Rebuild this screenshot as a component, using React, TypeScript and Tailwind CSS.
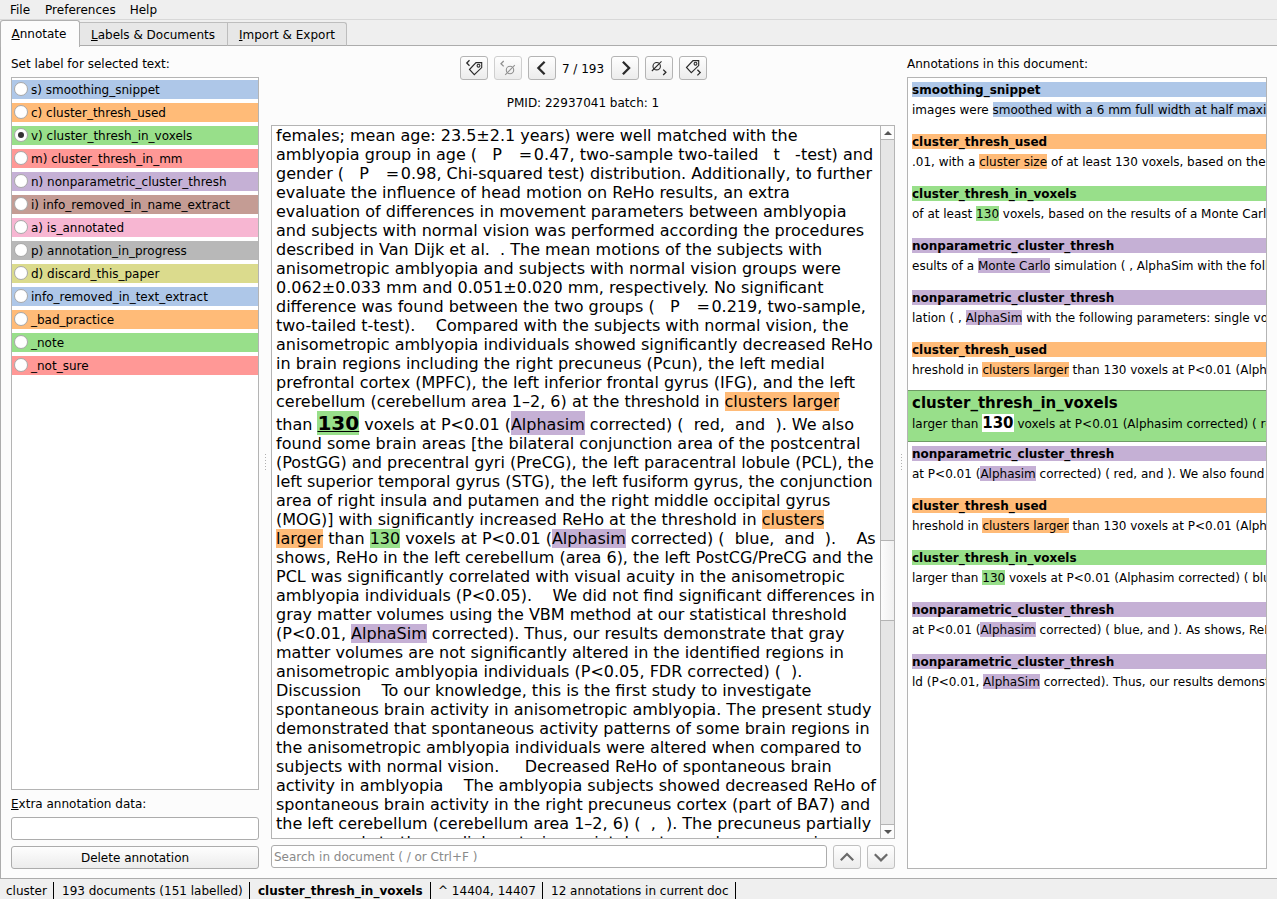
import { type ReactNode } from "react";

const BG: Record<string, string> = {
  blue: "bg-[#aec7e8]",
  orange: "bg-[#ffbb78]",
  green: "bg-[#98df8a]",
  red: "bg-[#ff9896]",
  purple: "bg-[#c5b0d5]",
  brown: "bg-[#c49c94]",
  pink: "bg-[#f7b6d2]",
  gray: "bg-[#b8b8b8]",
  olive: "bg-[#dbdb8d]",
};

const labels: [string, string][] = [
  ["s) smoothing_snippet", "blue"],
  ["c) cluster_thresh_used", "orange"],
  ["v) cluster_thresh_in_voxels", "green"],
  ["m) cluster_thresh_in_mm", "red"],
  ["n) nonparametric_cluster_thresh", "purple"],
  ["i) info_removed_in_name_extract", "brown"],
  ["a) is_annotated", "pink"],
  ["p) annotation_in_progress", "gray"],
  ["d) discard_this_paper", "olive"],
  ["info_removed_in_text_extract", "blue"],
  ["_bad_practice", "orange"],
  ["_note", "green"],
  ["_not_sure", "red"],
];

function Hl({ c, children, className = "" }: { c: string; children: ReactNode; className?: string }) {
  return <span className={`${BG[c]} ${className}`}>{children}</span>;
}

const lines: ReactNode[] = [
  "females; mean age: 23.5±2.1 years) were well matched with the",
  "amblyopia group in age (   P   \u200a=\u200a0.47, two-sample two-tailed   t   -test) and",
  "gender (   P   \u200a=\u200a0.98, Chi-squared test) distribution. Additionally, to further",
  "evaluate the influence of head motion on ReHo results, an extra",
  "evaluation of differences in movement parameters between amblyopia",
  "and subjects with normal vision was performed according the procedures",
  "described in Van Dijk et al.  . The mean motions of the subjects with",
  "anisometropic amblyopia and subjects with normal vision groups were",
  "0.062±0.033 mm and 0.051±0.020 mm, respectively. No significant",
  "difference was found between the two groups (   P   \u200a=\u200a0.219, two-sample,",
  "two-tailed t-test).    Compared with the subjects with normal vision, the",
  "anisometropic amblyopia individuals showed significantly decreased ReHo",
  "in brain regions including the right precuneus (Pcun), the left medial",
  "prefrontal cortex (MPFC), the left inferior frontal gyrus (IFG), and the left",
  <>cerebellum (cerebellum area 1–2, 6) at the threshold in <Hl c="orange">clusters larger</Hl></>,
  <>than <Hl c="green" className="inline-block h-[24px] align-top text-[20px] leading-[25px] font-bold underline underline-offset-1 decoration-1">130</Hl> voxels at P&lt;0.01 (<Hl c="purple" className="inline-block h-[24px] align-top leading-[27px]">Alphasim</Hl> corrected) (  red,  and  ). We also</>,
  "found some brain areas [the bilateral conjunction area of the postcentral",
  "(PostGG) and precentral gyri (PreCG), the left paracentral lobule (PCL), the",
  "left superior temporal gyrus (STG), the left fusiform gyrus, the conjunction",
  "area of right insula and putamen and the right middle occipital gyrus",
  <>(MOG)] with significantly increased ReHo at the threshold in <Hl c="orange">clusters</Hl></>,
  <><Hl c="orange">larger</Hl> than <Hl c="green">130</Hl> voxels at P&lt;0.01 (<Hl c="purple">Alphasim</Hl> corrected) (  blue,  and  ).    As</>,
  "shows, ReHo in the left cerebellum (area 6), the left PostCG/PreCG and the",
  "PCL was significantly correlated with visual acuity in the anisometropic",
  "amblyopia individuals (P<0.05).    We did not find significant differences in",
  "gray matter volumes using the VBM method at our statistical threshold",
  <>(P&lt;0.01, <Hl c="purple">AlphaSim</Hl> corrected). Thus, our results demonstrate that gray</>,
  "matter volumes are not significantly altered in the identified regions in",
  "anisometropic amblyopia individuals (P<0.05, FDR corrected) (  ).",
  "Discussion    To our knowledge, this is the first study to investigate",
  "spontaneous brain activity in anisometropic amblyopia. The present study",
  "demonstrated that spontaneous activity patterns of some brain regions in",
  "the anisometropic amblyopia individuals were altered when compared to",
  "subjects with normal vision.     Decreased ReHo of spontaneous brain",
  "activity in amblyopia    The amblyopia subjects showed decreased ReHo of",
  "spontaneous brain activity in the right precuneus cortex (part of BA7) and",
  "the left cerebellum (cerebellum area 1–2, 6) (  ,  ). The precuneus partially",
  "corresponds to the medial posterior parietal cortex and precuneus is a",
];

type Ann = [string, string, string, string, string];
const anns: Ann[] = [
  ["smoothing_snippet", "blue", "images were ", "smoothed with a 6 mm full width at half maximum", ""],
  ["cluster_thresh_used", "orange", ".01, with a ", "cluster size", " of at least 130 voxels, based on the"],
  ["cluster_thresh_in_voxels", "green", "of at least ", "130", " voxels, based on the results of a Monte Carlo"],
  ["nonparametric_cluster_thresh", "purple", "esults of a ", "Monte Carlo", " simulation ( , AlphaSim with the follow"],
  ["nonparametric_cluster_thresh", "purple", "lation ( , ", "AlphaSim", " with the following parameters: single vox"],
  ["cluster_thresh_used", "orange", "hreshold in ", "clusters larger", " than 130 voxels at P<0.01 (Alpha"],
  ["cluster_thresh_in_voxels", "green", "larger than ", "130", " voxels at P<0.01 (Alphasim corrected) ( red"],
  ["nonparametric_cluster_thresh", "purple", "at P<0.01 (", "Alphasim", " corrected) ( red, and ). We also found"],
  ["cluster_thresh_used", "orange", "hreshold in ", "clusters larger", " than 130 voxels at P<0.01 (Alpha"],
  ["cluster_thresh_in_voxels", "green", "larger than ", "130", " voxels at P<0.01 (Alphasim corrected) ( blue"],
  ["nonparametric_cluster_thresh", "purple", "at P<0.01 (", "Alphasim", " corrected) ( blue, and ). As shows, ReHo"],
  ["nonparametric_cluster_thresh", "purple", "ld (P<0.01, ", "AlphaSim", " corrected). Thus, our results demonstrate"],
];

const status: [string, string][] = [
  ["cluster", "w-[54px] pl-[6px]"],
  ["193 documents (151 labelled)", "w-[196px] pl-[8px]"],
  ["cluster_thresh_in_voxels", "w-[181px] pl-[8px] font-bold"],
  ["^ 14404, 14407", "w-[112px] pl-[7px]"],
  ["12 annotations in current doc", "w-[193px] pl-[8px]"],
];

const BTN = "flex items-center justify-center rounded-[3px] border bg-linear-to-b from-[#fefefe] to-[#ececec]";

function NavButton({ children, disabled = false, title }: { children: ReactNode; disabled?: boolean; title: string }) {
  return (
    <button aria-label={title} className={`${BTN} h-6 w-7 ${disabled ? "border-[#cfcfcf] text-[#909090]" : "border-[#b4b4b4] text-[#2a2a2a]"}`}>
      <svg width="26" height="22" viewBox="0 0 26 22" fill="none" stroke="currentColor" strokeWidth="1.1">{children}</svg>
    </button>
  );
}

const Tag = ({ x = 0, y = 0 }: { x?: number; y?: number }) => (
  <g transform={`translate(${x} ${y})`}>
    <path d="M8.5 12.5 15 5.6 20.7 5.6 20.7 10.6 13.3 17.6Z" />
    <circle cx="17.5" cy="8.7" r="1.4" />
  </g>
);

const Empty = ({ x = 0, y = 0 }: { x?: number; y?: number }) => (
  <g transform={`translate(${x} ${y})`}>
    <circle cx="15" cy="13" r="3.7" />
    <path d="M10.2 17.8 19.8 8.2" />
  </g>
);

function Grip() {
  return (
    <div className="flex h-full w-3 flex-col items-center justify-center gap-[2px]">
      {[0, 1, 2, 3, 4, 5].map((i) => (
        <div key={i} className="h-px w-px bg-[#b0b0b0]" />
      ))}
    </div>
  );
}

export default function App() {
  return (
    <div className="flex h-[899px] w-[1277px] flex-col overflow-hidden bg-[#efefef] font-['DejaVu_Sans',sans-serif] text-[12px] leading-[14px] text-black">
      <nav className="flex h-5 shrink-0 items-center border-b border-[#d8d8d8] pl-[10px]">
        <span className="mr-[15px]">File</span>
        <span className="mr-[14px]">Preferences</span>
        <span>Help</span>
      </nav>
      <div className="z-10 flex h-[26px] shrink-0 items-end">
        <div className="mb-[-1px] flex h-[27px] w-20 items-center justify-center rounded-t-[3px] border border-b-0 border-[#b0b0b0] bg-[#fcfcfc] pb-px pr-[2px]">
          <span><u>A</u>nnotate</span>
        </div>
        <div className="flex h-6 w-[148px] items-center justify-center border-y border-r border-t-[#bdbdbd] border-r-[#bdbdbd] border-b-[#acacac] bg-[#e7e7e7] pt-[2px] pr-px">
          <span><u>L</u>abels &amp; Documents</span>
        </div>
        <div className="flex h-6 w-[119px] items-center justify-center rounded-tr-[3px] border-y border-r border-t-[#bdbdbd] border-r-[#bdbdbd] border-b-[#acacac] bg-[#e7e7e7] pt-[2px]">
          <span><u>I</u>mport &amp; Export</span>
        </div>
        <div className="h-px grow bg-[#acacac]" />
      </div>

      <main className="flex h-[833px] shrink-0 border-b border-l border-[#acacac] bg-[#fcfcfc] pl-[10px]">
        <section className="flex w-[248px] shrink-0 flex-col pt-[11px]">
          <h2>Set label for selected text:</h2>
          <div className="mt-[6px] flex h-[713px] flex-col gap-1 border border-[#b4b4b4] bg-white pt-[2px]">
            {labels.map(([name, c], i) => (
              <label key={name} className={`${BG[c]} flex h-[19px] shrink-0 items-center gap-[3px] pl-[2px]`}>
                <span className="mb-px flex size-[14px] items-center justify-center rounded-full border border-[#a8a8a8] bg-white">
                  {i === 2 && <span className="size-[6px] rounded-full bg-[#333]" />}
                </span>
                <span>{name}</span>
              </label>
            ))}
          </div>
          <div className="mt-[7px]"><u>E</u>xtra annotation data:</div>
          <div className="mt-[6px] h-[23px] rounded-[3px] border border-[#acacac] bg-white" />
          <button className={`${BTN} mt-[6px] h-[23px] border-[#acacac]`}>Delete annotation</button>
        </section>

        <Grip />

        <section className="flex w-[624px] shrink-0 flex-col">
          <div className="mt-[10px] flex h-6 items-center justify-center gap-[6px]">
            <NavButton title="Previous labelled"><path d="M8.5 3.3 5.8 6 8.5 8.7" strokeWidth="1.3" /><Tag /></NavButton>
            <NavButton title="Previous unlabelled" disabled><path d="M8.7 4 6 6.7 8.7 9.4" strokeWidth="1.3" /><Empty /></NavButton>
            <NavButton title="Previous"><path d="M15.6 4.8 9.4 11 15.6 17.2" strokeWidth="2.3" /></NavButton>
            <span className="w-[43px] pt-px text-center whitespace-nowrap">7 / 193</span>
            <NavButton title="Next"><path d="M10.9 4.8 17.1 11 10.9 17.2" strokeWidth="2.3" /></NavButton>
            <NavButton title="Next unlabelled"><Empty x={-4.3} y={-3.8} /><path d="M17.2 12.6 19.9 15.3 17.2 18" strokeWidth="1.3" /></NavButton>
            <NavButton title="Next labelled"><Tag x={-2} y={-2} /><path d="M17.4 12.8 20.2 15.6 17.4 18.4" strokeWidth="1.3" /></NavButton>
          </div>
          <div className="mt-[16px] text-center">PMID: 22937041 batch: 1</div>
          <div className="mt-[15px] flex h-[714px] border border-[#b4b4b4] bg-white">
            <div className="h-[712px] w-[608px] overflow-hidden pl-1 text-[16px]">
              {lines.map((l, i) => (
                <div key={i} className={`whitespace-pre ${i === 15 ? "h-[23px] leading-[27px]" : "h-[19px] leading-[19px]"}`}>{l}</div>
              ))}
            </div>
            <div className="flex w-[14px] flex-col border-l border-[#b4b4b4] bg-[#e5e5e5]">
              <div className="flex h-[14px] items-center justify-center border-b border-[#b4b4b4] bg-[#fcfcfc]">
                <svg width="8" height="4"><path d="M0 4 4 0 8 4Z" fill="#555" /></svg>
              </div>
              <div className="mt-[400px] h-[81px] border-y border-[#b4b4b4] bg-linear-to-r from-[#fcfcfc] to-[#f0f0f0]" />
              <div className="mt-auto flex h-[14px] items-center justify-center border-t border-[#b4b4b4] bg-[#fcfcfc]">
                <svg width="8" height="4"><path d="M0 0 4 4 8 0Z" fill="#555" /></svg>
              </div>
            </div>
          </div>
          <div className="mt-[6px] flex gap-[6px]">
            <div className="flex h-[23px] w-[556px] items-center rounded-[3px] border border-[#acacac] bg-white pl-[2px] text-[#8a8a8a]">Search in document ( / or Ctrl+F )</div>
            <button aria-label="Find previous" className={`${BTN} h-6 w-7 border-[#c0c0c0]`}>
              <svg width="14" height="10" fill="none" stroke="#6a6a6a" strokeWidth="2.2"><path d="M.8 8.2 7 2 13.2 8.2" /></svg>
            </button>
            <button aria-label="Find next" className={`${BTN} h-6 w-7 border-[#c0c0c0]`}>
              <svg width="14" height="10" fill="none" stroke="#6a6a6a" strokeWidth="2.2"><path d="M.8 2.2 7 8.4 13.2 2.2" /></svg>
            </button>
          </div>
        </section>

        <Grip />

        <section className="flex w-[360px] shrink-0 flex-col pt-[11px]">
          <h2>Annotations in this document:</h2>
          <div className="mt-[6px] h-[792px] overflow-hidden border border-[#b4b4b4] bg-white whitespace-pre">
            {anns.map(([name, c, pre, mark, post], i) =>
              i === 6 ? (
                <div key={i} className={`${BG[c]} h-[52px] border-y border-[#6f9c66] pl-1`}>
                  <div className="h-[22px] pt-[3px] text-[15px] leading-[19px] font-bold">{name}</div>
                  <div className="flex h-[19px] items-start">
                    <span className="leading-[23px]">{pre}</span>
                    <span className="mt-px h-[18px] bg-white text-[15px] leading-[18px] font-bold">{mark}</span>
                    <span className="leading-[23px]">{post}</span>
                  </div>
                </div>
              ) : (
                <div key={i} className="h-[52px] pt-1 pl-1">
                  <div className={`${BG[c]} h-[15px] leading-[17px] font-bold`}>{name}</div>
                  <div className="mt-[5px] flex h-[15px] leading-[17px]">
                    <span>{pre}</span>
                    <span className={BG[c]}>{mark}</span>
                    <span>{post}</span>
                  </div>
                </div>
              ),
            )}
          </div>
        </section>
      </main>

      <footer className="flex h-5 items-end whitespace-nowrap">
        {status.map(([t, cls]) => (
          <span key={t} className={`flex h-[17px] items-center border-r border-black ${cls}`}>{t}</span>
        ))}
      </footer>
    </div>
  );
}
